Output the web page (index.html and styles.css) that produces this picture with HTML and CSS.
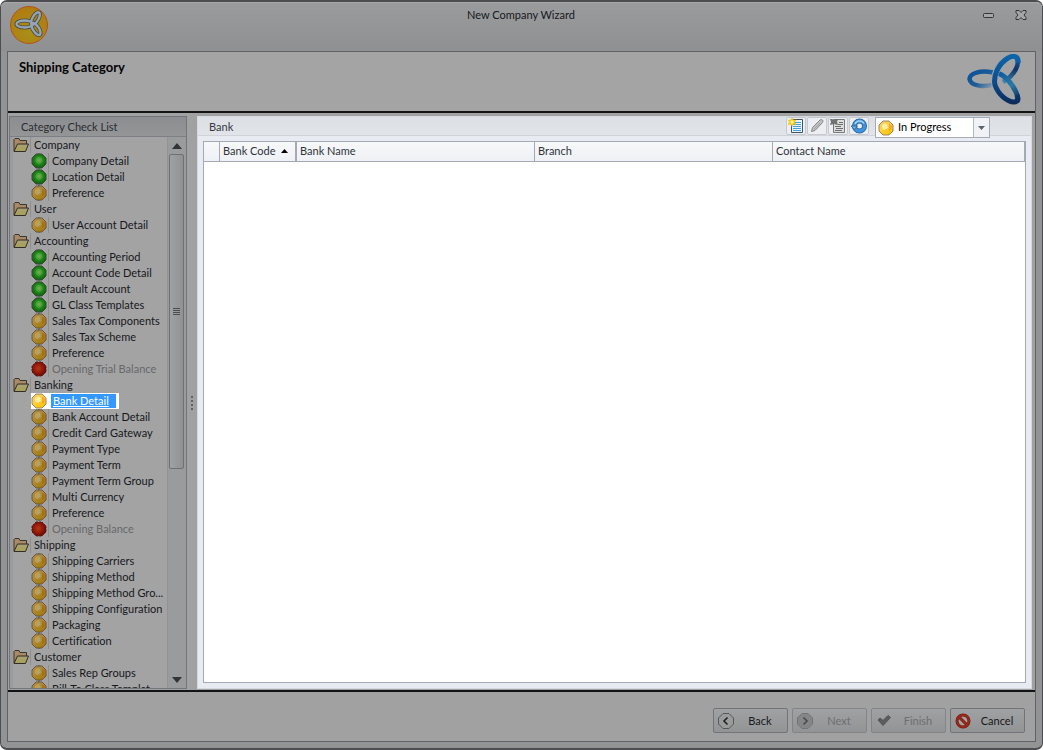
FILE: index.html
```html
<!DOCTYPE html>
<html lang="en">
<head>
    <meta charset="UTF-8">
    <title>New Company Wizard</title>
    <link rel="stylesheet" href="styles.css">
</head>
<body>
<svg class="defs" width="0" height="0" aria-hidden="true">
    <defs>
        <radialGradient id="gGreen" cx="50%" cy="45%" r="55%">
            <stop offset="0" stop-color="#6fb05c"/><stop offset="0.4" stop-color="#469b37"/><stop offset="0.5" stop-color="#218c18"/><stop offset="1" stop-color="#125c10"/>
        </radialGradient>
        <linearGradient id="gAmber" x1="0" y1="0" x2="0.6" y2="1">
            <stop offset="0" stop-color="#b18543"/><stop offset="0.5" stop-color="#b08a38"/><stop offset="1" stop-color="#a57a08"/>
        </linearGradient>
        <radialGradient id="gRed" cx="45%" cy="45%" r="55%">
            <stop offset="0" stop-color="#ac3c1c"/><stop offset="0.5" stop-color="#9c1c08"/><stop offset="1" stop-color="#6c0c08"/>
        </radialGradient>
        <linearGradient id="gBright" x1="0" y1="0" x2="0.6" y2="1">
            <stop offset="0" stop-color="#ffc55c"/><stop offset="0.5" stop-color="#ffd04a"/><stop offset="1" stop-color="#ffc400"/>
        </linearGradient>
        <linearGradient id="gFolder" x1="0" y1="0" x2="0" y2="1">
            <stop offset="0" stop-color="#aaa276"/><stop offset="1" stop-color="#a6a054"/>
        </linearGradient>
        <linearGradient id="gLoopLeft" gradientUnits="userSpaceOnUse" x1="8" y1="16" x2="24" y2="34">
            <stop offset="0" stop-color="#0b549a"/><stop offset="0.5" stop-color="#1c5c98"/><stop offset="1" stop-color="#8a9bac"/>
        </linearGradient>
        <linearGradient id="gLoopMain" gradientUnits="userSpaceOnUse" x1="40" y1="0" x2="40" y2="50">
            <stop offset="0" stop-color="#0c66ac"/><stop offset="0.5" stop-color="#0c4f92"/><stop offset="1" stop-color="#0b2a5a"/>
        </linearGradient>
        <linearGradient id="gLoopTop" gradientUnits="userSpaceOnUse" x1="51" y1="4" x2="38" y2="28">
            <stop offset="0" stop-color="#0c5ea4"/><stop offset="0.4" stop-color="#0c3468"/><stop offset="1" stop-color="#4383ac"/>
        </linearGradient>
        <linearGradient id="gLoopLow" gradientUnits="userSpaceOnUse" x1="32" y1="20" x2="50" y2="47">
            <stop offset="0" stop-color="#0c5ca0"/><stop offset="0.5" stop-color="#2a7ba6"/><stop offset="1" stop-color="#0b2e60"/>
        </linearGradient>
        <radialGradient id="gLogo" cx="50%" cy="70%" r="65%">
            <stop offset="0" stop-color="#a98f18"/><stop offset="1" stop-color="#b07c10"/>
        </radialGradient>
        <symbol id="green" viewBox="0 0 16 16">
            <path d="M5 1h6l4 4v6l-4 4H5l-4-4V5z" fill="url(#gGreen)" stroke="#3b5136" stroke-width="1"/>
            <path d="M7 0h2M7 16h2" stroke="#555"/>
        </symbol>
        <symbol id="amber" viewBox="0 0 16 16">
            <path d="M5 1h6l4 4v6l-4 4H5l-4-4V5z" fill="url(#gAmber)" stroke="#68583f"/>
            <path d="M4 5l3-2 2 1 1 4-4 2-2-2z" fill="#b3a35c"/>
            <path d="M11 3l3 3-1 4-2 1z" fill="#a65f16" opacity=".6"/>
            <path d="M7 0h2M7 16h2" stroke="#555"/>
        </symbol>
        <symbol id="red" viewBox="0 0 16 16">
            <path d="M5 1h6l4 4v6l-4 4H5l-4-4V5z" fill="url(#gRed)" stroke="#5a1c16" stroke-dasharray="2 1"/>
        </symbol>
        <symbol id="bright" viewBox="0 0 16 16">
            <path d="M5 1h6l4 4v6l-4 4H5l-4-4V5z" fill="url(#gBright)" stroke="#9c8560"/>
            <path d="M4 5l3-2 2 1 1 4-4 2-2-2z" fill="#fff1a0"/>
            <path d="M11 3l3 3-1 4-2 1z" fill="#f49a20" opacity=".7"/>
        </symbol>
        <symbol id="folder" viewBox="0 0 16 16">
            <path d="M1 14V2.500l1-1h4l1 2h6.500V7" fill="#aa8a64" stroke="#3a352c"/>
            <path d="M1 14.500L4.500 7h11l-3 7.500z" fill="url(#gFolder)" stroke="#2f2d24"/>
        </symbol>
    </defs>
</svg>

<div class="window">
    <div class="titlebar">
        <svg class="app-icon" width="40" height="40" viewBox="0 0 40 40">
            <circle cx="20" cy="20" r="18.500" fill="url(#gLogo)" stroke="#b0541c"/>
            <g fill="none" stroke="#4a4c42" stroke-width="4">
                <ellipse cx="15.500" cy="19" rx="8" ry="3.500"/>
                <ellipse cx="26.500" cy="13.500" rx="3" ry="7" transform="rotate(30 26.500 13.500)"/>
                <ellipse cx="27" cy="24" rx="3" ry="7" transform="rotate(-33 27 24)"/>
            </g>
            <g fill="none" stroke="#93a5b6" stroke-width="2.400">
                <ellipse cx="15.500" cy="19" rx="8" ry="3.500"/>
                <ellipse cx="27" cy="24" rx="3" ry="7" transform="rotate(-33 27 24)"/>
                <ellipse cx="26.500" cy="13.500" rx="3" ry="7" transform="rotate(30 26.500 13.500)"/>
            </g>
        </svg>
        <div class="window-title">New Company Wizard</div>
        <div class="window-buttons">
            <button type="button" aria-label="Minimize">
                <svg width="12" height="12" viewBox="0 0 12 12"><rect x="0.500" y="4.500" width="10" height="4" rx="1" fill="#a6a6a6" stroke="#333437"/></svg>
            </button>
            <button type="button" aria-label="Close">
                <svg width="12" height="12" viewBox="0 0 12 12"><path d="M1 1.500h3L6 3.500l2-2h3v2L9 6l2 2.500v2H8L6 8.500l-2 2H1v-2L3 6 1 3.500z" fill="#a6a6a6" stroke="#333437"/></svg>
            </button>
        </div>
    </div>

    <div class="frame">
        <div class="header">
            <h1>Shipping Category</h1>
            <svg width="54" height="52" viewBox="0 0 54 52" fill="none">
                <path d="M26 18.500C13 16 3 19 2.500 25c1 7 15 9 25 5" stroke="url(#gLoopLeft)" stroke-width="4.500"/>
                <path d="M49 3c5 6-1 18-13 25" stroke="url(#gLoopTop)" stroke-width="4.500"/>
                <path d="M32 19.500c10 4 21 21 18 28" stroke="url(#gLoopLow)" stroke-width="5"/>
                <path d="M41 4C31 10 26 22 28 31c1 4 3 7 6 10" stroke="#a4a4a4" stroke-width="7"/>
                <path d="M51 9C52 2 47 1 41 4 31 10 26 22 28 31c3 9 12 17 19 17 4 0 5-3 3-7" stroke="url(#gLoopMain)" stroke-width="5"/>
                <path d="M32 19.500c7 3 12 9 16 17" stroke="url(#gLoopLow)" stroke-width="4.500"/>
            </svg>
        </div>

        <div class="content">
            <div class="sidebar">
                <div class="panel-title">Category Check List</div>
                <div class="tree-box">
                    <ul class="tree">
                        <li><span class="folder"><svg><use href="#folder"/></svg><b>Company</b></span>
                            <ul>
                                <li><svg><use href="#green"/></svg><a href="#">Company Detail</a></li>
                                <li><svg><use href="#green"/></svg><a href="#">Location Detail</a></li>
                                <li><svg><use href="#amber"/></svg><a href="#">Preference</a></li>
                            </ul>
                        </li>
                        <li><span class="folder"><svg><use href="#folder"/></svg><b>User</b></span>
                            <ul>
                                <li><svg><use href="#amber"/></svg><a href="#">User Account Detail</a></li>
                            </ul>
                        </li>
                        <li><span class="folder"><svg><use href="#folder"/></svg><b>Accounting</b></span>
                            <ul>
                                <li><svg><use href="#green"/></svg><a href="#">Accounting Period</a></li>
                                <li><svg><use href="#green"/></svg><a href="#">Account Code Detail</a></li>
                                <li><svg><use href="#green"/></svg><a href="#">Default Account</a></li>
                                <li><svg><use href="#green"/></svg><a href="#">GL Class Templates</a></li>
                                <li><svg><use href="#amber"/></svg><a href="#">Sales Tax Components</a></li>
                                <li><svg><use href="#amber"/></svg><a href="#">Sales Tax Scheme</a></li>
                                <li><svg><use href="#amber"/></svg><a href="#">Preference</a></li>
                                <li class="off"><svg><use href="#red"/></svg><a href="#">Opening Trial Balance</a></li>
                            </ul>
                        </li>
                        <li><span class="folder"><svg><use href="#folder"/></svg><b>Banking</b></span>
                            <ul>
                                <li class="active"><svg><use href="#bright"/></svg><a href="#">Bank Detail</a></li>
                                <li><svg><use href="#amber"/></svg><a href="#">Bank Account Detail</a></li>
                                <li><svg><use href="#amber"/></svg><a href="#">Credit Card Gateway</a></li>
                                <li><svg><use href="#amber"/></svg><a href="#">Payment Type</a></li>
                                <li><svg><use href="#amber"/></svg><a href="#">Payment Term</a></li>
                                <li><svg><use href="#amber"/></svg><a href="#">Payment Term Group</a></li>
                                <li><svg><use href="#amber"/></svg><a href="#">Multi Currency</a></li>
                                <li><svg><use href="#amber"/></svg><a href="#">Preference</a></li>
                                <li class="off"><svg><use href="#red"/></svg><a href="#">Opening Balance</a></li>
                            </ul>
                        </li>
                        <li><span class="folder"><svg><use href="#folder"/></svg><b>Shipping</b></span>
                            <ul>
                                <li><svg><use href="#amber"/></svg><a href="#">Shipping Carriers</a></li>
                                <li><svg><use href="#amber"/></svg><a href="#">Shipping Method</a></li>
                                <li><svg><use href="#amber"/></svg><a href="#">Shipping Method Gro...</a></li>
                                <li><svg><use href="#amber"/></svg><a href="#">Shipping Configuration</a></li>
                                <li><svg><use href="#amber"/></svg><a href="#">Packaging</a></li>
                                <li><svg><use href="#amber"/></svg><a href="#">Certification</a></li>
                            </ul>
                        </li>
                        <li><span class="folder"><svg><use href="#folder"/></svg><b>Customer</b></span>
                            <ul>
                                <li><svg><use href="#amber"/></svg><a href="#">Sales Rep Groups</a></li>
                                <li><svg><use href="#amber"/></svg><a href="#">Bill-To Class Templat...</a></li>
                            </ul>
                        </li>
                    </ul>
                    <div class="scrollbar">
                        <button type="button" aria-label="Scroll up"><svg width="10" height="6" viewBox="0 0 10 6"><path d="M5 0l5 6H0z" fill="#333437"/></svg></button>
                        <div class="track"><div class="thumb"><i></i></div></div>
                        <button type="button" aria-label="Scroll down"><svg width="10" height="6" viewBox="0 0 10 6"><path d="M0 0h10L5 6z" fill="#333437"/></svg></button>
                    </div>
                </div>
            </div>

            <div class="splitter"><i></i><i></i><i></i><i></i></div>

            <div class="main">
                <div class="toolbar">
                    <h2>Bank</h2>
                    <button type="button" class="tool" aria-label="New">
                        <svg width="16" height="16" viewBox="0 0 16 16">
                            <path d="M3.500 1.500h11v13h-11z" fill="#e6f5ff" stroke="#46525e"/>
                            <path d="M5 4.500h8M5 6.500h8M5 8.500h8M5 10.500h8M5 12.500h8" stroke="#48a0dc"/>
                            <path d="M4 0l1.200 2L8 2 6.500 4 8 6.500 5.200 6 4 8.500 2.800 6 0 6.500 1.500 4 0 2h2.800z" fill="#ffd21c" stroke="#e8b60c" stroke-width=".5"/>
                            <circle cx="4" cy="4" r="1.500" fill="#fff79a"/>
                        </svg>
                    </button>
                    <button type="button" class="tool" aria-label="Edit" disabled>
                        <svg width="16" height="16" viewBox="0 0 16 16"><path d="M2.500 13.500l1-4 7.500-7.500q1.500-1 2.500 0t0 2.500L6 12.500z" fill="#c0c2c4" stroke="#85888b"/><path d="M5 11l6-6" stroke="#a0a2a4"/></svg>
                    </button>
                    <button type="button" class="tool" aria-label="Delete" disabled>
                        <svg width="16" height="16" viewBox="0 0 16 16"><path d="M3.500 1.500h11v13h-11z" fill="#dcdcdc" stroke="#77797b"/><path d="M9 4.500h4M8 6.500h5M5 8.500h6M6 10.500h7M5 12.500h7" stroke="#6c6e70"/><path d="M0 1h2l2 1 2-1h2L7 4l1 3-4-1-4 1 1-3z" fill="#707274"/></svg>
                    </button>
                    <button type="button" class="tool" aria-label="Refresh">
                        <svg width="16" height="16" viewBox="0 0 16 16">
                            <circle cx="8.500" cy="8" r="5" fill="#eceef1" stroke="#2a5f96" stroke-width="5"/>
                            <circle cx="8.500" cy="8" r="5" fill="none" stroke="#3f93dc" stroke-width="3.400"/>
                            <path d="M4 6a5 5 0 0 1 9-.5" fill="none" stroke="#a4d3f5" stroke-width="1.500"/>
                            <path d="M0 8h6.500L3.300 11.500z" fill="#6fb4ec" stroke="#2a5f96" stroke-width=".8"/>
                        </svg>
                    </button>
                    <div class="status">
                        <svg width="16" height="16"><use href="#bright"/></svg>
                        <select aria-label="Status">
                            <option>In Progress</option>
                        </select>
                        <span class="drop"><svg width="7" height="4" viewBox="0 0 7 4"><path d="M0 0h7L3.500 4z" fill="#5c6370"/></svg></span>
                    </div>
                </div>
                <div class="grid-box">
                    <table class="grid">
                        <colgroup><col class="c-mark"><col class="c-code"><col class="c-name"><col class="c-name"><col></colgroup>
                        <thead>
                        <tr>
                            <th></th>
                            <th class="sorted">Bank Code <svg width="7" height="4" viewBox="0 0 7 4"><path d="M3.500 0L7 4H0z"/></svg></th>
                            <th>Bank Name</th>
                            <th>Branch</th>
                            <th>Contact Name</th>
                        </tr>
                        </thead>
                        <tbody></tbody>
                    </table>
                </div>
            </div>
        </div>

        <div class="footer">
            <button type="button">
                <svg width="16" height="16" viewBox="0 0 16 16"><path d="M5 .5h6L15.500 5v6L11 15.500H5L.5 11V5z" fill="#9b9b9b" stroke="#555759"/><path d="M9.500 4.500L6 8l3.500 3.500" fill="none" stroke="#222" stroke-width="1.600"/></svg>
                <span>Back</span>
            </button>
            <button type="button" disabled>
                <svg width="16" height="16" viewBox="0 0 16 16"><path d="M5 .5h6L15.500 5v6L11 15.500H5L.5 11V5z" fill="#858687" stroke="#717375"/><path d="M6.500 4.500L10 8l-3.500 3.500" fill="none" stroke="#484a4c" stroke-width="1.600"/></svg>
                <span>Next</span>
            </button>
            <button type="button" disabled>
                <svg width="16" height="16" viewBox="0 0 16 16"><path d="M2 7l2-2 3 2.500L12 2.500l2.500 2L7 12.500z" fill="#5a5c5e" stroke="#505254"/></svg>
                <span>Finish</span>
            </button>
            <button type="button">
                <svg width="16" height="16" viewBox="0 0 16 16"><circle cx="8" cy="8" r="6" fill="#a2a2a2" stroke="#6c1c14" stroke-width="3"/><path d="M4 4l8 8" stroke="#6c1c14" stroke-width="3"/><circle cx="8" cy="8" r="6" fill="none" stroke="#982818" stroke-width="2"/><path d="M4 4l8 8" stroke="#982818" stroke-width="2"/></svg>
                <span>Cancel</span>
            </button>
        </div>
    </div>
</div>
</body>
</html>
```
FILE: styles.css
```css
* {
    box-sizing: border-box;
}
body, ul, h1, h2 {
    margin: 0;
    padding: 0;
}
body {
    font-family: Lato, "Liberation Sans", sans-serif;
    font-size: 11px;
    line-height: 16px;
    font-variant-ligatures: none;
    color: #16181c;
    background: #fff;
}
button, select {
    font: inherit;
    color: inherit;
    margin: 0;
    padding: 0;
    border: 0;
    background: none;
}
svg {
    display: block;
    flex: none;
}
.defs {
    position: absolute;
}

/* window */
.window {
    display: flex;
    flex-direction: column;
    height: 100vh;
    padding: 0 6px 6px;
    border: 1px solid #4b4d50;
    border-top-width: 2px;
    border-bottom-width: 2px;
    border-radius: 7px;
    background: #929395;
}
.titlebar {
    display: flex;
    align-items: flex-start;
    justify-content: space-between;
    height: 49px;
    margin: 0 -6px;
    padding: 2px 15px 0 8px;
    border-top: 1px solid #a8a8a9;
    border-radius: 5px 5px 0 0;
    background: linear-gradient(#9a9b9c, #8f9092);
}
.window-title {
    padding-top: 2px;
}
.window-buttons {
    display: flex;
    gap: 20px;
    padding-top: 4px;
}
.titlebar .app-icon {
    margin-right: 10px;
}
.frame {
    display: flex;
    flex-direction: column;
    flex: 1;
    min-height: 0;
    border: 1px solid #606266;
    background: #a1a1a1;
}

.header {
    display: flex;
    justify-content: space-between;
    height: 61px;
    padding: 2px 14px 0 11px;
    border-bottom: 2px solid #121315;
    background: #a4a4a4;
}
.header h1 {
    padding-top: 5px;
    font-size: 13px;
    font-weight: bold;
    color: #050505;
}

.content {
    display: flex;
    flex: 1;
    min-height: 0;
    padding: 3px 3px 1px 1px;
}

/* category tree */
.sidebar {
    display: flex;
    flex-direction: column;
    width: 178px;
    border: 1px solid #727579;
    background: #9a9b9c;
}
.panel-title {
    height: 20px;
    padding: 2px 11px;
    border-bottom: 1px solid #7c7f83;
    background: linear-gradient(#8b8d90, #939597);
    color: #2b2d31;
}
.tree-box {
    display: flex;
    flex: 1;
    min-height: 0;
    padding-left: 3px;
}
.tree {
    flex: 1;
    min-width: 0;
    overflow: hidden;
    background: #a3a3a3;
}
.tree li {
    list-style: none;
}
.tree svg {
    width: 16px;
    height: 16px;
}
.tree .folder, .tree li li {
    display: flex;
    height: 16px;
    white-space: nowrap;
}
.tree b {
    padding-left: 3px;
    margin-left: 1px;
    border-left: 1px solid #8f8f90;
    font-weight: normal;
}
.tree ul {
    padding-left: 18px;
}
.tree a {
    padding-left: 3px;
    margin-left: 1px;
    border-left: 1px solid #8f8f90;
    color: inherit;
    text-decoration: none;
}
.tree .off {
    color: #66686b;
}
.tree .active {
    width: 88px;
    background: #fff;
}
.tree .active a {
    flex: none;
    width: 65px;
    height: 14px;
    margin: 1px 0 0 4px;
    padding-left: 2px;
    border: 0;
    line-height: 14px;
    background: #3399fe;
    color: #fff;
    text-decoration: underline;
}
.scrollbar {
    display: flex;
    flex-direction: column;
    width: 19px;
    border-left: 1px solid #929395;
}
.scrollbar button {
    display: flex;
    align-items: center;
    justify-content: center;
    height: 17px;
}
.track {
    flex: 1;
    padding: 0 2px 0 1px;
}
.thumb {
    display: flex;
    align-items: center;
    justify-content: center;
    height: 61%;
    border: 1px solid #6d7074;
    border-radius: 2px;
    background: linear-gradient(90deg, #a0a1a2, #8f9193);
}
.thumb i {
    width: 7px;
    height: 7px;
    background: repeating-linear-gradient(#4a4c50 0 1px, transparent 1px 2px);
}

.splitter {
    display: flex;
    flex-direction: column;
    align-items: center;
    justify-content: center;
    gap: 2px;
    width: 10px;
}
.splitter i {
    width: 2px;
    height: 2px;
    background: #606267;
}

/* work area */
.main {
    display: flex;
    flex-direction: column;
    flex: 1;
    min-width: 0;
    padding: 0 5px 5px;
    border: 1px solid #d4d9df;
    background: #e8ebf1;
}
.toolbar {
    display: flex;
    height: 19px;
    margin: 0 -5px;
    padding-right: 41px;
    border-bottom: 1px solid #d0d4da;
    background: linear-gradient(#dce0e4, #e1e4e8);
}
.toolbar h2 {
    flex: 1;
    padding: 2px 11px;
    font-size: 11px;
    font-weight: normal;
    color: #34383f;
}
.tool {
    display: flex;
    align-items: center;
    justify-content: center;
    width: 20px;
    height: 18px;
    margin-right: 1px;
    border: 1px solid #c6cad0;
    border-radius: 2px;
    background: #eceef1;
}
.status {
    display: flex;
    align-items: center;
    width: 115px;
    height: 21px;
    margin-left: 5px;
    padding-left: 2px;
    border: 1px solid #a5abb6;
    background: #fff;
    position: relative;
    z-index: 1;
}
.status select {
    flex: 1;
    min-width: 0;
    height: 19px;
    padding: 0 0 2px 4px;
    appearance: none;
    color: #000;
}
.drop {
    display: flex;
    align-items: center;
    justify-content: center;
    width: 16px;
    height: 19px;
    border-left: 1px solid #b4bac3;
    background: #f0f2f5;
    pointer-events: none;
}
.grid-box {
    flex: 1;
    margin-top: 5px;
    border: 1px solid #a3a9b5;
    background: #fff;
}
.grid {
    width: 100%;
    border-collapse: separate;
    border-spacing: 0;
    table-layout: fixed;
}
.c-mark {
    width: 16px;
}
.c-code {
    width: 77px;
}
.c-name {
    width: 238px;
}
.grid th {
    height: 20px;
    padding: 0 3px 2px;
    border-right: 1px solid #a3a9b5;
    border-bottom: 1px solid #a3a9b5;
    background: linear-gradient(#f7f8fa, #eef1f4);
    font-weight: normal;
    text-align: left;
    color: #2f333a;
    white-space: nowrap;
}
.grid th.sorted {
    border-right-width: 2px;
}
.grid th svg {
    display: inline-block;
    margin-left: 3px;
    vertical-align: 2px;
}

.footer {
    display: flex;
    justify-content: flex-end;
    gap: 4px;
    height: 51px;
    padding: 16px 10px 0;
    border-top: 2px solid #121315;
}
.footer button {
    display: flex;
    align-items: center;
    width: 75px;
    height: 25px;
    padding-left: 4px;
    border: 1px solid #717479;
    border-radius: 2px;
    background: linear-gradient(#a0a1a2, #929496);
}
.footer button span {
    flex: 1;
    padding-right: 1px;
    text-align: center;
}
.footer button:disabled {
    border-color: #828488;
    color: #6c6f73;
}
```
